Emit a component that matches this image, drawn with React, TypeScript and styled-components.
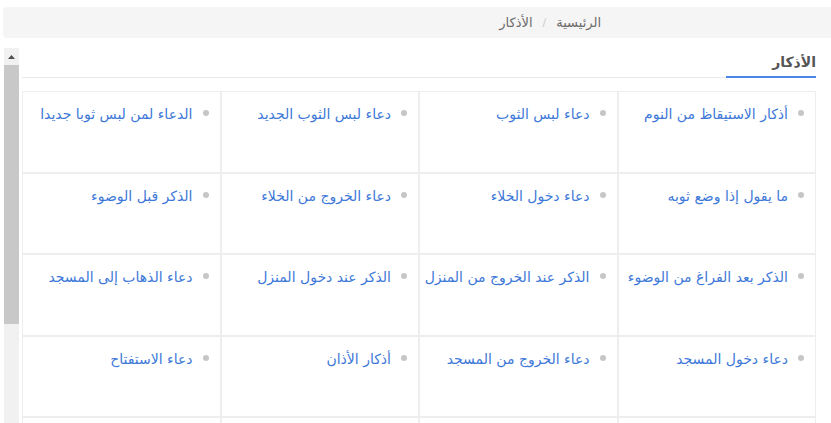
import styled, { createGlobalStyle } from 'styled-components';

const GlobalStyle = createGlobalStyle`
  html, body {
    margin: 0;
    padding: 0;
    overflow: hidden;
    background: #fff;
  }
  body {
    font-family: 'DejaVu Sans', 'Noto Sans', sans-serif;
  }
`;

const adhkar: string[] = [
  'أذكار الاستيقاظ من النوم',
  'دعاء لبس الثوب',
  'دعاء لبس الثوب الجديد',
  'الدعاء لمن لبس ثوبا جديدا',
  'ما يقول إذا وضع ثوبه',
  'دعاء دخول الخلاء',
  'دعاء الخروج من الخلاء',
  'الذكر قبل الوضوء',
  'الذكر بعد الفراغ من الوضوء',
  'الذكر عند الخروج من المنزل',
  'الذكر عند دخول المنزل',
  'دعاء الذهاب إلى المسجد',
  'دعاء دخول المسجد',
  'دعاء الخروج من المسجد',
  'أذكار الأذان',
  'دعاء الاستفتاح',
  'دعاء الركوع',
  'دعاء الرفع من الركوع',
  'دعاء السجود',
  'دعاء الجلسة بين السجدتين',
];

const Page = styled.div`
  direction: rtl;
  padding-left: 3px;
`;

const Breadcrumb = styled.ol`
  list-style: none;
  margin: 7px 0 0 0;
  height: 31px;
  padding: 0 230px 0 0;
  display: flex;
  align-items: center;
  gap: 10px;
  background: #f5f5f5;
  border-radius: 4px 0 0 4px;
  font-size: 13px;
`;

const Crumb = styled.li`
  color: #6b6b6b;
`;

const Sep = styled.li`
  color: #ccc;
  font-size: 11px;
`;

const Panel = styled.div`
  margin: 10px 0 0 1px;
  height: 375px;
  display: flex;
  overflow: hidden;
`;

const Body = styled.div`
  flex: 1;
  padding: 0 15px 0 3px;
`;

/* fake classic scrollbar, sits on the left in rtl */
const Scrollbar = styled.div`
  flex: none;
  width: 15px;
  display: flex;
  flex-direction: column;
  background: #f1f1f1;
`;

const ScrollButton = styled.div`
  height: 17px;
  display: flex;
  align-items: center;
  justify-content: center;
`;

const Thumb = styled.div`
  height: 259px;
  background: #c8c8c8;
`;

const PanelHeader = styled.div`
  display: flex;
  border-bottom: 1px solid #e8e8e8;
`;

const Title = styled.h2`
  margin: 0 0 -1px 0;
  width: 90px;
  padding: 6px 0 6px;
  line-height: 16px;
  font-size: 14px;
  font-weight: bold;
  color: #555;
  border-bottom: 2px solid #4a86e8;
`;

const Grid = styled.ul`
  list-style: none;
  margin: 13px 0 0;
  padding: 0;
  display: grid;
  grid-template-columns: repeat(4, 1fr);
  grid-auto-rows: 81.5px;
`;

const Cell = styled.li`
  box-sizing: border-box;
  border: 1px solid #eee;
  padding: 9px 11px 0 0;
  display: flex;
  align-items: flex-start;
  gap: 10px;
  white-space: nowrap;
`;

const Dot = styled.span`
  flex: none;
  width: 6px;
  height: 6px;
  margin-top: 9px;
  border-radius: 50%;
  background: #c6c6c6;
`;

const Link = styled.a`
  color: #3d78d8;
  font-size: 14px;
  line-height: 26px;
  text-decoration: none;
`;

function App() {
  return (
    <Page>
      <GlobalStyle />
      <Breadcrumb>
        <Crumb>الرئيسية</Crumb>
        <Sep>/</Sep>
        <Crumb>الأذكار</Crumb>
      </Breadcrumb>
      <Panel>
        <Body>
          <PanelHeader>
            <Title>الأذكار</Title>
          </PanelHeader>
          <Grid>
            {adhkar.map((name) => (
              <Cell key={name}>
                <Dot />
                <Link href="#">{name}</Link>
              </Cell>
            ))}
          </Grid>
        </Body>
        <Scrollbar>
          <ScrollButton>
            <svg width="7" height="4" viewBox="0 0 7 4">
              <path d="M0 4 L3.5 0 L7 4 Z" fill="#505050" />
            </svg>
          </ScrollButton>
          <Thumb />
        </Scrollbar>
      </Panel>
    </Page>
  );
}

export default App;
